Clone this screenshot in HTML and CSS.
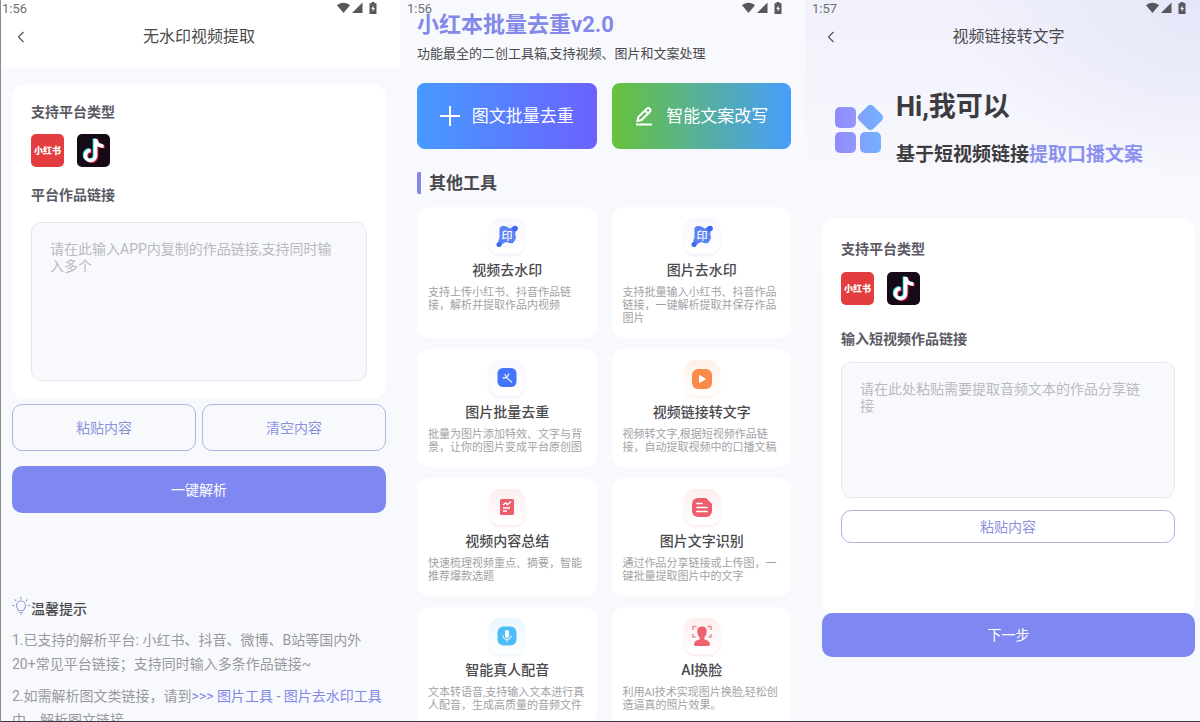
FILE: index.html
```html
<!DOCTYPE html>
<html lang="zh-CN">
<head>
    <meta charset="UTF-8">
    <meta name="viewport" content="width=device-width, initial-scale=1.0">
    <title>小红本批量去重</title>
    <link rel="stylesheet" href="styles.css">
</head>
<body>
    <!-- Shared icons -->
    <svg class="sprite" aria-hidden="true">
        <symbol id="signals" viewBox="0 0 40 12">
            <path d="M0 3.2C3.5-.2 9.500-.2 13 3.200L6.500 11z"/>
            <path d="M25.500.5V11H15z"/>
            <path d="M34.500 0h3v1.200H39.500V12h-7V1.200h2z"/>
            <path d="M36.500 3.500l-2.300 3.600h1.500v2.600l2.200-3.700h-1.400z" fill="#f8f9fd"/>
        </symbol>
        <symbol id="back" viewBox="0 0 10 12">
            <path d="M7.500 1L2.500 6l5 5" fill="none" stroke="#555" stroke-width="1.200"/>
        </symbol>
        <symbol id="note" viewBox="0 0 33 33">
            <g fill="none" stroke-width="3.600">
                <g stroke="#25f4ee" transform="translate(-1 -.6)">
                    <path d="M18.500 5v16.500a5 5 0 1 1-5-5"/>
                    <path d="M18.500 5.500c.5 4 3.500 6.500 8 6.700"/>
                </g>
                <g stroke="#fe2c55" transform="translate(1 .6)">
                    <path d="M18.500 5v16.500a5 5 0 1 1-5-5"/>
                    <path d="M18.500 5.500c.5 4 3.500 6.500 8 6.700"/>
                </g>
                <g stroke="#fff">
                    <path d="M18.500 5v16.500a5 5 0 1 1-5-5"/>
                    <path d="M18.500 5.500c.5 4 3.500 6.500 8 6.700"/>
                </g>
            </g>
        </symbol>
        <symbol id="stamp" viewBox="0 0 24 24">
            <path d="M4.500 4.500Q5 2 8 2q4-.5 6.500 2.500L18 3l3 3q-1.500 4 0 7.500-.5 3-3 5.500-3 1-6-1-3 0-5.500 3L3 17q2-3 1.500-6z" fill="#5b82f2"/>
            <circle cx="20" cy="4.500" r="2.800" fill="#3c66ec"/>
            <circle cx="4" cy="20.500" r="2.500" fill="#3c66ec"/>
            <text x="6.500" y="16" font-size="11" font-weight="500" fill="#fff">印</text>
        </symbol>
    </svg>

    <main class="screens">
        <!-- Watermark-free video extraction -->
        <section class="screen extract">
            <header class="topbar">
                <div class="status"><span>1:56</span><svg><use href="#signals"/></svg></div>
                <div class="nav">
                    <button class="back" aria-label="返回"><svg><use href="#back"/></svg></button>
                    <h1>无水印视频提取</h1>
                </div>
            </header>
            <div class="card form-card">
                <h2>支持平台类型</h2>
                <div class="platforms">
                    <span class="platform red">小红书</span>
                    <span class="platform black"><svg><use href="#note"/></svg></span>
                </div>
                <label for="workLink">平台作品链接</label>
                <textarea id="workLink" placeholder="请在此输入APP内复制的作品链接,支持同时输入多个"></textarea>
            </div>
            <div class="actions">
                <button class="outline">粘贴内容</button>
                <button class="outline">清空内容</button>
            </div>
            <button class="primary">一键解析</button>
            <div class="tips">
                <h2>
                    <svg viewBox="0 0 18 20" fill="none" stroke="#9aa1de" stroke-width="1.200">
                        <path d="M6.500 13.500C6 12 4.500 11 4.500 8.500a4.500 4.500 0 0 1 9 0c0 2.500-1.500 3.500-2 5z"/>
                        <path d="M7 15.500h4M8 17h2M9 0v2.500M2.500 2.500l1.700 1.700M15.500 2.500l-1.700 1.700M0 8.500h2.500M15.500 8.500H18"/>
                    </svg>温馨提示
                </h2>
                <p>1.已支持的解析平台: 小红书、抖音、微博、B站等国内外<br>20+常见平台链接；支持同时输入多条作品链接~</p>
                <p>2.如需解析图文类链接，请到<a href="#">&gt;&gt;&gt; 图片工具 - 图片去水印工具</a>中，解析图文链接</p>
            </div>
        </section>

        <!-- Toolbox home -->
        <section class="screen tools">
            <div class="status"><span>1:56</span><svg><use href="#signals"/></svg></div>
            <h1>小红本批量去重v2.0</h1>
            <p class="subtitle">功能最全的二创工具箱,支持视频、图片和文案处理</p>
            <div class="features">
                <button class="feature blue">
                    <svg viewBox="0 0 20 20" fill="none" stroke="#fff" stroke-width="2"><path d="M10 0v20M0 10h20"/></svg>
                    图文批量去重
                </button>
                <button class="feature green">
                    <svg viewBox="0 0 20 20" fill="none" stroke="#fff" stroke-width="2"><path d="M2 18.500h16M3.500 15l.8-4L13 2.500q1.500-1 2.800.2t.2 2.800L7.500 14zM11 4.500l3 3"/></svg>
                    智能文案改写
                </button>
            </div>
            <h2>其他工具</h2>
            <div class="tool-grid">
                <article class="card tool">
                    <span class="tool-icon lilac"><svg><use href="#stamp"/></svg></span>
                    <h3>视频去水印</h3>
                    <p>支持上传小红书、抖音作品链接，解析并提取作品内视频</p>
                </article>
                <article class="card tool">
                    <span class="tool-icon lilac"><svg><use href="#stamp"/></svg></span>
                    <h3>图片去水印</h3>
                    <p>支持批量输入小红书、抖音作品链接，一键解析提取并保存作品图片</p>
                </article>
                <article class="card tool">
                    <span class="tool-icon lilac">
                        <svg viewBox="0 0 24 24">
                            <rect x="2.500" y="2" width="19" height="19" rx="5.500" fill="#4275fa"/>
                            <path d="M11.500 11.500l5 4.500M11.500 11.500L8 12M11.500 11.500L10 8.500M11.500 11.500l2.500-3.500" stroke="#dce6ff" stroke-width="1.300" stroke-linecap="round"/>
                        </svg>
                    </span>
                    <h3>图片批量去重</h3>
                    <p>批量为图片添加特效、文字与背景，让你的图片变成平台原创图</p>
                </article>
                <article class="card tool">
                    <span class="tool-icon orange">
                        <svg viewBox="0 0 24 24">
                            <rect x="2" y="3" width="20" height="20" rx="6" fill="#fb8b48"/>
                            <path d="M9.500 9.500v7l6-3.500z" fill="#fff" stroke="#fff" stroke-linejoin="round"/>
                        </svg>
                    </span>
                    <h3>视频链接转文字</h3>
                    <p>视频转文字,根据短视频作品链接，自动提取视频中的口播文稿</p>
                </article>
                <article class="card tool">
                    <span class="tool-icon pink">
                        <svg viewBox="0 0 24 24">
                            <rect x="5" y="4" width="14" height="16" rx="1.500" fill="#ec5f6c"/>
                            <path d="M8 10l2.500-2 2 1.500L16 6.500M8 13h7M8 16h4" fill="none" stroke="#fff" stroke-width="1.400"/>
                        </svg>
                    </span>
                    <h3>视频内容总结</h3>
                    <p>快速梳理视频重点、摘要，智能推荐爆款选题</p>
                </article>
                <article class="card tool">
                    <span class="tool-icon pink">
                        <svg viewBox="0 0 24 24">
                            <path d="M8 3h8l6 6v7a6 6 0 0 1-6 6H8a6 6 0 0 1-6-6V9a6 6 0 0 1 6-6z" fill="#ee5f6d"/>
                            <path d="M7 8.500h5M7 12.500h10M7 16.500h10" stroke="#fff" stroke-width="1.700" stroke-linecap="round"/>
                        </svg>
                    </span>
                    <h3>图片文字识别</h3>
                    <p>通过作品分享链接或上传图，一键批量提取图片中的文字</p>
                </article>
                <article class="card tool">
                    <span class="tool-icon sky">
                        <svg viewBox="0 0 24 24">
                            <rect x="2.500" y="2.500" width="19" height="19" rx="6" fill="#4cbcf8"/>
                            <rect x="10" y="6" width="4" height="8" rx="2" fill="#fff"/>
                            <path d="M8 11.500a4 4 0 0 0 8 0M12 15.500v2.500" fill="none" stroke="#e2f5ff" stroke-width="1.200"/>
                        </svg>
                    </span>
                    <h3>智能真人配音</h3>
                    <p>文本转语音,支持输入文本进行真人配音，生成高质量的音频文件</p>
                </article>
                <article class="card tool">
                    <span class="tool-icon pink">
                        <svg viewBox="0 0 24 24">
                            <path d="M3 6V2.500h3.500M17.500 2.500H21V6M3 10v3h2.500M21 10v3h-2.500" fill="none" stroke="#ee8f98" stroke-width="1.500"/>
                            <path d="M12 2.500c3.300 0 5 2.200 4.700 5.500-.2 2.400-1.200 4.300-2.300 5.200v2.300c3 .6 5.300 1.700 5.600 4.500 0 1.500-1 2-2 2H6c-1 0-2-.5-2-2 .3-2.800 2.600-3.900 5.600-4.500v-2.300c-1.100-.9-2.100-2.800-2.300-5.200C7 4.700 8.700 2.500 12 2.500z" fill="#ee626d"/>
                        </svg>
                    </span>
                    <h3>AI换脸</h3>
                    <p>利用AI技术实现图片换脸,轻松创造逼真的照片效果。</p>
                </article>
            </div>
        </section>

        <!-- Video link to text -->
        <section class="screen transcribe">
            <header class="topbar">
                <div class="status"><span>1:57</span><svg><use href="#signals"/></svg></div>
                <div class="nav">
                    <button class="back" aria-label="返回"><svg><use href="#back"/></svg></button>
                    <h1>视频链接转文字</h1>
                </div>
            </header>
            <div class="hero">
                <svg viewBox="0 0 48 50">
                    <defs>
                        <linearGradient id="tile" gradientUnits="userSpaceOnUse" x1="0" y1="0" x2="48" y2="0">
                            <stop offset="0" stop-color="#8f8bfb"/>
                            <stop offset=".4" stop-color="#9296fb"/>
                            <stop offset=".6" stop-color="#7ba5fb"/>
                            <stop offset="1" stop-color="#74b2ff"/>
                        </linearGradient>
                    </defs>
                    <g fill="url(#tile)">
                        <rect x="0" y="3" width="21" height="21" rx="5"/>
                        <rect x="0" y="28" width="21" height="21" rx="5"/>
                        <rect x="25" y="28" width="21" height="21" rx="5"/>
                        <path d="M32.500 2.200q3-2.700 6 0l8.300 8.300q2.700 3 0 6l-8.300 8.300q-3 2.700-6 0l-8.300-8.300q-2.700-3 0-6z"/>
                    </g>
                </svg>
                <div>
                    <p class="hello">Hi,我可以</p>
                    <p class="what">基于短视频链接<em>提取口播文案</em></p>
                </div>
            </div>
            <div class="card form-card">
                <h2>支持平台类型</h2>
                <div class="platforms">
                    <span class="platform red">小红书</span>
                    <span class="platform black"><svg><use href="#note"/></svg></span>
                </div>
                <label for="videoLink">输入短视频作品链接</label>
                <textarea id="videoLink" placeholder="请在此处粘贴需要提取音频文本的作品分享链接"></textarea>
                <button class="outline">粘贴内容</button>
            </div>
            <button class="primary">下一步</button>
        </section>
    </main>
</body>
</html>
```
FILE: styles.css
```css
* {
    box-sizing: border-box;
}

body {
    margin: 0;
    font-family: Roboto, "Noto Sans CJK SC", sans-serif;
    font-size: 14px;
    line-height: 20px;
    color: #4a4a4e;
    background-color: #f8f9fd;
}

h1, h2, h3, p {
    margin: 0;
}

button, textarea {
    font: inherit;
}

button {
    padding: 0;
    border: none;
    background: none;
    cursor: pointer;
}

a {
    color: #7f88ea;
    text-decoration: none;
}

.sprite {
    display: none;
}

.screens {
    display: grid;
    grid-template-columns: 399fr 405fr 395fr;
    height: 100vh;
    overflow: hidden;
    border-left: 1px solid #8a8a8e;
    border-bottom: 1px solid #3c3c40;
}

.screen {
    min-width: 0;
    padding: 0 14px 0 17px;
}

.extract {
    padding: 0 14px 0 11px;
}

.transcribe {
    padding: 0 5px 0 17px;
    background: radial-gradient(ellipse 240px 180px at 100% 0, #e5e6f8, rgba(229, 230, 248, 0)), linear-gradient(#f1f1fc, #f8f8fd 180px, #f7f9fd);
}

/* Status bar and navigation */
.status {
    display: flex;
    justify-content: space-between;
    height: 17px;
    margin-left: -10px;
    padding-right: 9px;
    font-size: 13px;
    line-height: 17px;
    color: #707074;
}

.status svg {
    width: 40px;
    height: 12px;
    margin-top: 2px;
    fill: #58585c;
}

.extract .topbar {
    margin: 0 -14px 0 -11px;
    padding: 0 14px 0 11px;
    background-color: #fff;
}

.nav {
    display: grid;
    grid-template-columns: 20px 1fr 20px;
    align-items: center;
    height: 50px;
    padding-bottom: 10px;
}

.nav h1 {
    font-size: 16px;
    font-weight: 400;
    text-align: center;
}

.back {
    height: 20px;
    text-align: left;
}

.back svg {
    display: block;
    width: 14px;
    height: 12px;
    margin-left: 2px;
}

/* Cards and forms */
.card {
    background-color: #fff;
    border-radius: 12px;
}

.form-card {
    display: flex;
    flex-direction: column;
    padding: 17px 19px;
}

.extract .form-card {
    margin-top: 18px;
}

.form-card h2, .form-card label {
    font-size: 14px;
    font-weight: 700;
    color: #5a5a64;
}

.platforms {
    display: flex;
    gap: 13px;
    margin: 12px 0 18px;
}

.platform {
    display: flex;
    align-items: center;
    justify-content: center;
    width: 33px;
    height: 33px;
    border-radius: 5px;
    font-size: 9px;
    font-weight: 900;
    color: #fff;
}

.platform svg {
    width: 33px;
    height: 33px;
}

.red {
    background-color: #e43d3f;
}

.black {
    background-color: #150a16;
}

textarea {
    display: block;
    width: 100%;
    height: 159px;
    margin-top: 17px;
    padding: 18px 24px 18px 18px;
    border: 1px solid #e6e7ec;
    border-radius: 10px;
    background-color: #f8f9fd;
    line-height: 17px;
    resize: none;
}

textarea::placeholder {
    color: #b9bac0;
}

.actions {
    display: grid;
    grid-template-columns: 1fr 1fr;
    gap: 6px;
    margin: 6px 0 15px;
}

.outline, .primary {
    height: 47px;
    border-radius: 10px;
}

.outline {
    border: 1px solid #b0b5e2;
    color: #8c93dc;
}

.primary {
    display: block;
    width: 100%;
    background-color: #7f88f0;
    color: #fff;
}

.tips {
    margin-top: 84px;
    color: #98999e;
}

.tips h2 {
    display: flex;
    align-items: center;
    gap: 1px;
    margin-bottom: 7px;
    font-size: 14px;
    font-weight: 500;
    color: #4a4a4e;
}

.tips svg {
    width: 18px;
    height: 20px;
    margin-bottom: 4px;
}

.tips p {
    margin-bottom: 8px;
    line-height: 24px;
}

/* Toolbox */
.tools h1 {
    font-size: 22px;
    line-height: 16px;
    color: #8388ea;
}

.subtitle {
    margin: 11px 0 19px;
    font-size: 13px;
}

.features, .tool-grid {
    display: grid;
    grid-template-columns: 1fr 1fr;
    column-gap: 15px;
}

.feature {
    display: flex;
    align-items: center;
    justify-content: center;
    gap: 12px;
    height: 66px;
    border-radius: 8px;
    font-size: 17px;
    color: #fff;
}

.feature svg {
    width: 20px;
    height: 20px;
}

.blue {
    background: linear-gradient(90deg, #479aff, #6b62ff);
}

.green {
    background: linear-gradient(90deg, #67c23a, #479dfc);
}

.tools h2 {
    margin: 23px 0 13px;
    padding-left: 8px;
    border-left: 4px solid #8388ea;
    border-radius: 2px;
    font-size: 17px;
    line-height: 22px;
}

.tool-grid {
    row-gap: 11px;
}

.tool {
    padding: 11px 10px 13px 11px;
}

.tool-icon {
    display: flex;
    align-items: center;
    justify-content: center;
    width: 36px;
    height: 36px;
    margin: 0 auto 6px;
    border-radius: 11px;
}

.tool-icon svg {
    width: 24px;
    height: 24px;
}

.lilac {
    background: linear-gradient(#f7f7fe, #fff);
    box-shadow: 0 2px 3px #f0effc;
}

.orange {
    background: linear-gradient(#fff0e8, #fff);
    box-shadow: 0 2px 3px #fdf3ee;
}

.pink {
    background: linear-gradient(#fdeeee, #fff);
    box-shadow: 0 2px 3px #fce9e9;
}

.sky {
    background: linear-gradient(#e8f6fe, #fff);
    box-shadow: 0 2px 3px #ebf6fd;
}

.tool h3 {
    margin-bottom: 6px;
    font-size: 14px;
    font-weight: 500;
    text-align: center;
}

.tool p {
    font-size: 11px;
    line-height: 13px;
    color: #a2a2a6;
}

/* Link to text */
.hero {
    display: flex;
    align-items: center;
    gap: 13px;
    padding: 24px 0 52px 13px;
    font-weight: 700;
    color: #3c3c40;
}

.hero svg {
    width: 48px;
    height: 50px;
}

.hello {
    margin-bottom: 20px;
    font-size: 27px;
    line-height: 32px;
}

.what {
    font-size: 19px;
    line-height: 24px;
}

.what em {
    font-style: normal;
    color: #8b91ee;
}

.transcribe .form-card {
    padding: 20px 20px 70px 19px;
}

.transcribe .platforms {
    margin: 13px 0 24px;
}

.transcribe textarea {
    height: 136px;
    margin: 13px 0 12px;
}

.transcribe .outline {
    height: 33px;
}

.transcribe .primary {
    height: 44px;
}
```
